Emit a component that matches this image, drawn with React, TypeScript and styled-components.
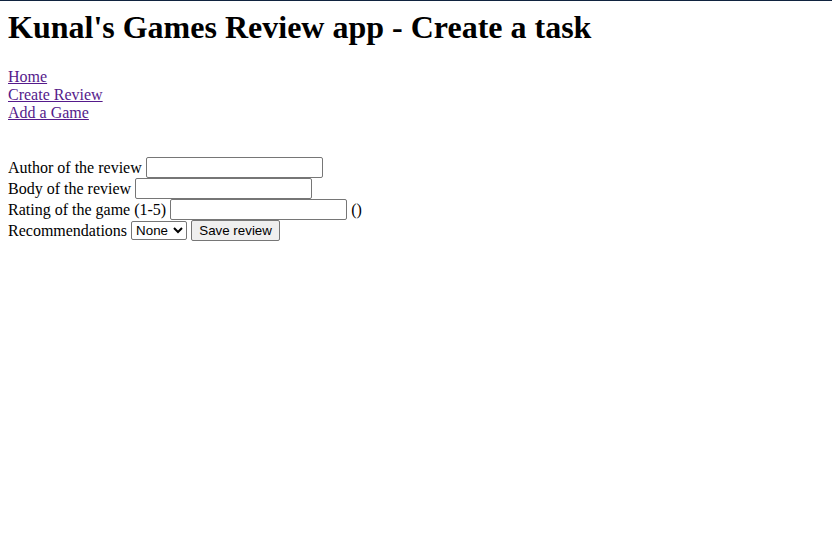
import React from "react";
import styled, { createGlobalStyle } from "styled-components";

const GlobalStyle = createGlobalStyle`
  html {
    border-top: 1px solid #10233f;
    background: #ffffff;
  }
  body {
    margin: 8px;
    font-family: "Liberation Serif", "Times New Roman", serif;
    font-size: 16px;
    color: #000000;
  }
`;

const Title = styled.h1`
  font-size: 32px;
  font-weight: bold;
  margin: 0 0 22px;
`;

const Nav = styled.nav`
  display: flex;
  flex-direction: column;
  align-items: flex-start;
`;

const NavLink = styled.a`
  color: #551a8b;
  text-decoration: underline;
`;

const Form = styled.form`
  margin-top: 35px;
`;

const Row = styled.div`
  height: 21px;
  display: flex;
  align-items: center;
  white-space: pre;
`;

const TextInput = styled.input`
  box-sizing: border-box;
  width: 177px;
  height: 21px;
  padding: 1px 2px;
  border: 1px solid #767676;
  border-radius: 2px;
  font-family: "Liberation Sans", Arial, sans-serif;
  font-size: 13.33px;
  background: #ffffff;
`;

const Select = styled.select`
  box-sizing: border-box;
  width: 56px;
  height: 19px;
  border: 1px solid #767676;
  border-radius: 2px;
  font-family: "Liberation Sans", Arial, sans-serif;
  font-size: 13.33px;
  background: #ffffff;
  color: #000000;
`;

const Button = styled.button`
  box-sizing: border-box;
  width: 89px;
  height: 21px;
  margin-left: 4px;
  padding: 1px 6px;
  border: 1px solid #767676;
  border-radius: 2px;
  background: #efefef;
  color: #000000;
  font-family: "Liberation Sans", Arial, sans-serif;
  font-size: 13.33px;
`;

export default function App() {
  return (
    <>
      <GlobalStyle />
      <Title>Kunal's Games Review app - Create a task</Title>
      <Nav>
        <NavLink href="#">Home</NavLink>
        <NavLink href="#">Create Review</NavLink>
        <NavLink href="#">Add a Game</NavLink>
      </Nav>
      <Form onSubmit={(e) => e.preventDefault()}>
        <Row>
          {"Author of the review "}
          <TextInput type="text" />
        </Row>
        <Row>
          {"Body of the review "}
          <TextInput type="text" />
        </Row>
        <Row>
          {"Rating of the game (1-5) "}
          <TextInput type="text" />
          {" ()"}
        </Row>
        <Row>
          {"Recommendations "}
          <Select defaultValue="None">
            <option value="None">None</option>
            <option value="Yes">Yes</option>
            <option value="No">No</option>
          </Select>
          <Button type="submit">Save review</Button>
        </Row>
      </Form>
    </>
  );
}
